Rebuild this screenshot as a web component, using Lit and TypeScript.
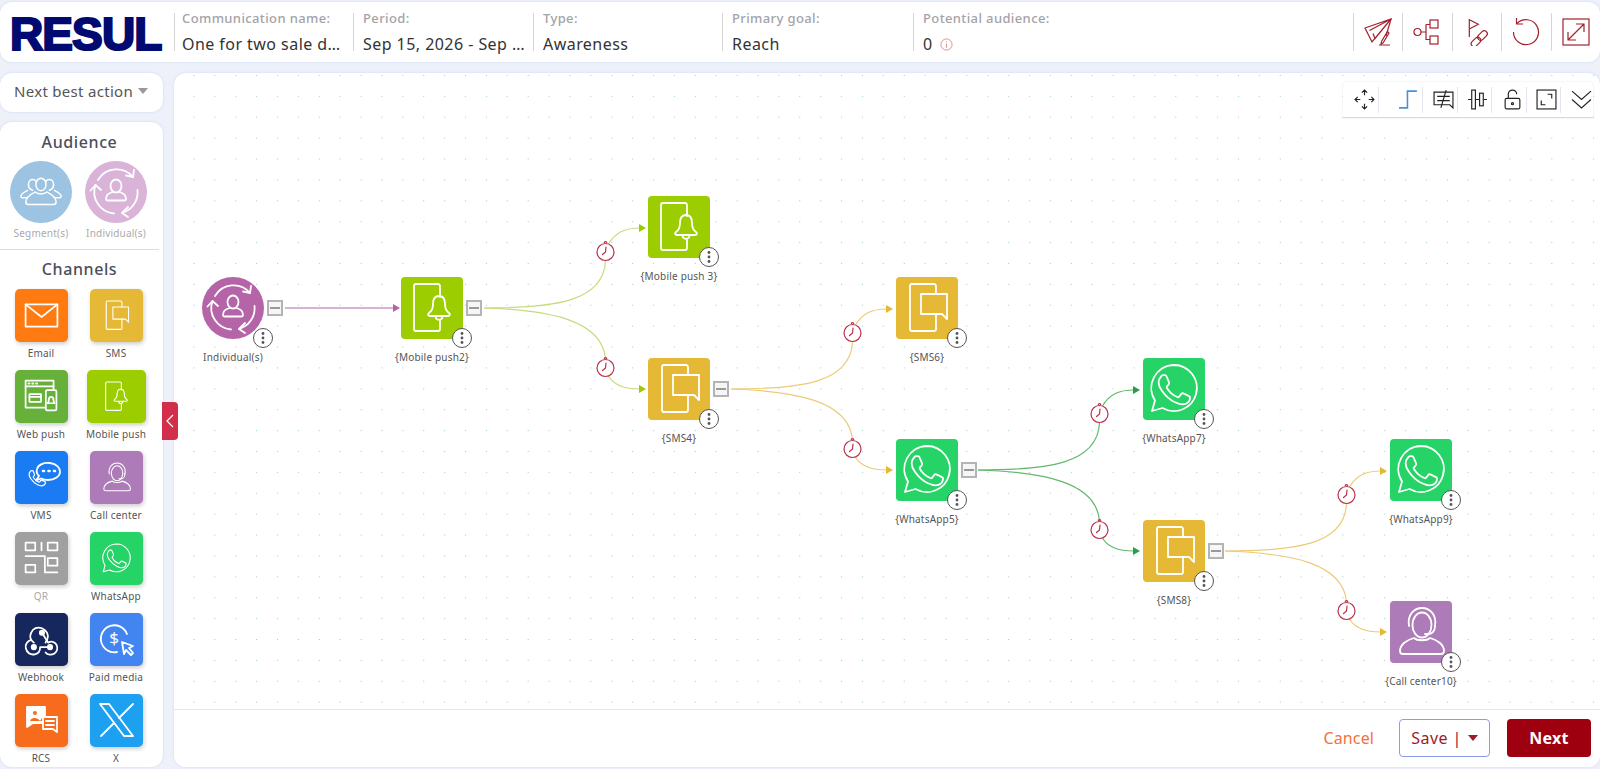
import { html, svg, css, LitElement, TemplateResult } from 'lit';
import { customElement } from 'lit/decorators.js';

// canvas origin in page coordinates, nodes below are given in page coordinates
const ORIGIN_X = 174;
const ORIGIN_Y = 73;

const HANDSET = 'M17.472 14.382c-.297-.149-1.758-.867-2.03-.967-.273-.099-.471-.148-.67.15-.197.297-.767.966-.94 1.164-.173.199-.347.223-.644.075-.297-.15-1.255-.463-2.39-1.475-.883-.788-1.48-1.761-1.653-2.059-.173-.297-.018-.458.13-.606.134-.133.298-.347.446-.52.149-.174.198-.298.298-.497.099-.198.05-.371-.025-.52-.075-.149-.669-1.612-.916-2.207-.242-.579-.487-.5-.669-.51-.173-.008-.371-.01-.57-.01-.198 0-.52.074-.792.372-.272.297-1.04 1.016-1.04 2.479 0 1.462 1.065 2.875 1.213 3.074.149.198 2.096 3.2 5.077 4.487.709.306 1.262.489 1.694.625.712.227 1.36.195 1.871.118.571-.085 1.758-.719 2.006-1.413.248-.694.248-1.289.173-1.413-.074-.124-.272-.198-.57-.347z';

const ICONS: Record<string, TemplateResult> = {
  mobile: svg`
    <path d="M39 20V9a2 2 0 0 0-2-2H15a2 2 0 0 0-2 2v43a2 2 0 0 0 2 2h22a2 2 0 0 0 2-2v-8"/>
    <path d="M38 19c-4 0-6 3-6 8 0 5-1 7-4 9-1.500 1-1 3 1 3h18c2 0 2.500-2 1-3-3-2-4-4-4-9 0-5-2-8-6-8z"/>
    <path d="M34.500 39c0 5 7 5 7 0"/>`,
  sms: svg`
    <path d="M40 17V9a2 2 0 0 0-2-2H16a2 2 0 0 0-2 2v43a2 2 0 0 0 2 2h22a2 2 0 0 0 2-2V37"/>
    <path d="M25 17h26v25l-5-5H25z"/>`,
  whatsapp: svg`
    <path d="M31 7a23 23 0 1 1-11.500 43L9 53l3-10.500A23 23 0 0 1 31 7z"/>
    <path transform="translate(0 .5) scale(2.6)" stroke-width=".7" d="${HANDSET}"/>`,
  call: svg`
    <ellipse cx="32" cy="24" rx="9.500" ry="12.500"/>
    <path d="M19 25c-2-11 5-18 13-18s15 7 13 18"/>
    <path d="M45 25c0 5-3 8-6 8h-4"/>
    <path d="M24 37c-8 2-14 7-14 13 0 2 1 3 3 3h38c2 0 3-1 3-3 0-6-6-11-14-13-3 3-13 3-16 0z"/>`,
  individual: svg`
    <path d="M13 19A21.500 21.500 0 0 1 48 16"/><path d="M41 14.500l7 1.500 1-7"/>
    <path d="M10.500 24A21.500 21.500 0 0 0 29 52.500"/><path d="M5.500 29.500l5-5.500 5.500 5"/>
    <path d="M52.500 29A21.500 21.500 0 0 1 37 52"/><path d="M43 46l-6 6 6 4"/>
    <ellipse cx="31" cy="25" rx="5.500" ry="6.500"/>
    <path d="M27.500 31c-4 1-6.500 4-6.500 7 0 1 .5 1.500 1.500 1.500h17c1 0 1.500-.5 1.500-1.500 0-3-2.500-6-6.500-7"/>`,
  segment: svg`
    <ellipse cx="31" cy="22" rx="6" ry="7.500"/>
    <path d="M13 43c0-7 7-10 11-12 3 3 11 3 14 0 4 2 11 5 11 12 0 2-1 3-3 3H16c-2 0-3-1-3-3z"/>
    <path d="M21 29c-3-1-5-4-5-7 0-4 2.500-6 5-6 1.500 0 3 .5 4 2"/>
    <path d="M41 29c3-1 5-4 5-7 0-4-2.500-6-5-6-1.500 0-3 .5-4 2"/>
    <path d="M14 38H9c-1.500 0-2-1-2-2 0-3 4-5 8-7"/>
    <path d="M48 38h5c1.500 0 2-1 2-2 0-3-4-5-8-7"/>`,
  email: svg`<rect x="11" y="15" width="33" height="23"/><path d="M11 15l16.500 13L44 15"/>`,
  webpush: svg`
    <path d="M31 38H11V10h29v9"/><path d="M11 16h29"/>
    <path d="M14 13h1M18 13h1M22 13h1" stroke-width="2"/>
    <rect x="15" y="24" width="12" height="8"/><path d="M15 27h12"/>
    <rect x="32" y="20" width="11" height="21" rx="1.500"/>
    <path d="M37.500 27c-2 0-2.500 2-2.500 3.500 0 2-1 2.500-1 3h7c0-.5-1-1-1-3 0-1.500-.5-3.500-2.500-3.500z"/>`,
  vms: svg`
    <path transform="translate(6 11) scale(1.350)" stroke-width=".9" d="${HANDSET}"/>
    <path d="M24 25c-2-2-3-4-2-7 1-4 7-7 13-6 7 1 10 5 10 9 0 4-5 8-12 8-3 0-5-.5-7-1.500l-5 2z"/>
    <path d="M28 20h1M33.500 20h1M39 20h1" stroke-width="2.600" stroke-linecap="round"/>`,
  qr: svg`
    <rect x="11" y="10" width="10" height="8"/><path d="M27.500 10v8"/><rect x="34" y="10" width="10" height="8"/>
    <rect x="11" y="33" width="10" height="8"/><rect x="34" y="26" width="10" height="8"/>
    <path d="M11 24h20v17h13"/>`,
  webhook: svg`
    <g stroke-width="2">
      <path d="M18 30c-4-3-5-7-3-11 2-5 7-7 12-5 5 2 8 7 6 12l-2 4"/>
      <path d="M15 27c-4 1-7 5-6 9 1 5 5 8 10 7 4-1 6-4 6-8h11"/>
      <path d="M27 19l7 11c3-2 7-1 9 2 2 4 1 8-2 10-3 2-8 2-10-1"/>
    </g>
    <circle cx="27" cy="19" r="2.500" fill="#fff"/><circle cx="18" cy="35" r="2.500" fill="#fff"/><circle cx="36" cy="35" r="2.500" fill="#fff"/>`,
  paid: svg`
    <path d="M37 21a13.500 13.500 0 1 0-10 18"/>
    <text x="24" y="31" text-anchor="middle" class="glyph">$</text>
    <path d="M32 29l11 4-4 2 4 5-2 2-5-5-2 4z"/>`,
  rcs: svg`
    <path d="M12 13h18v16H18l-6 4z" fill="#fff"/>
    <circle cx="20" cy="19" r="2" fill="#f76b1c" stroke="none"/>
    <path d="M15 27c1-4 8-4 10 0l2-3 2 3z" fill="#f76b1c" stroke="none"/>
    <path d="M28 23h14v15l-4-3H28z" fill="#f76b1c"/><path d="M31 27h8M31 31h8"/>`,
  x: svg`<path d="M10 10h9l24 32h-9z"/><path d="M43 10L29 24M24 29L11 42"/>`,
};

const NODES = [
  { x: 202, y: 277, icon: 'individual', label: 'Individual(s)', kind: 'individual', round: true, toggle: true },
  { x: 401, y: 277, icon: 'mobile', label: '{Mobile push2}', kind: 'mobile', toggle: true },
  { x: 648, y: 196, icon: 'mobile', label: '{Mobile push 3}', kind: 'mobile' },
  { x: 648, y: 358, icon: 'sms', label: '{SMS4}', kind: 'sms', toggle: true },
  { x: 896, y: 277, icon: 'sms', label: '{SMS6}', kind: 'sms' },
  { x: 896, y: 439, icon: 'whatsapp', label: '{WhatsApp5}', kind: 'whatsapp', toggle: true },
  { x: 1143, y: 358, icon: 'whatsapp', label: '{WhatsApp7}', kind: 'whatsapp' },
  { x: 1143, y: 520, icon: 'sms', label: '{SMS8}', kind: 'sms', toggle: true },
  { x: 1390, y: 439, icon: 'whatsapp', label: '{WhatsApp9}', kind: 'whatsapp' },
  { x: 1390, y: 601, icon: 'call', label: '{Call center10}', kind: 'call' },
];

// each fork: start of the line, colours of the line and of the arrowheads
const FORKS = [
  { x: 484, y: 308, line: '#c4dc7c', head: '#9bcb00' },
  { x: 731, y: 389, line: '#eccb78', head: '#e5b935' },
  { x: 978, y: 470, line: '#62b86c', head: '#2a9d4a' },
  { x: 1225, y: 551, line: '#eccb78', head: '#e5b935' },
];

const CHANNELS = [
  { icon: 'email', label: 'Email', kind: 'email', vb: '0 0 55 53' },
  { icon: 'sms', label: 'SMS', kind: 'sms' },
  { icon: 'webpush', label: 'Web push', kind: 'webpush', vb: '0 0 55 53' },
  { icon: 'mobile', label: 'Mobile push', kind: 'mobile', wide: true },
  { icon: 'vms', label: 'VMS', kind: 'vms', vb: '0 0 53 53' },
  { icon: 'call', label: 'Call center', kind: 'call' },
  { icon: 'qr', label: 'QR', kind: 'qr', vb: '0 0 55 53', off: true },
  { icon: 'whatsapp', label: 'WhatsApp', kind: 'whatsapp' },
  { icon: 'webhook', label: 'Webhook', kind: 'webhook', vb: '-3 -3 59 59' },
  { icon: 'paid', label: 'Paid media', kind: 'paid', vb: '0 0 53 53' },
  { icon: 'rcs', label: 'RCS', kind: 'rcs', vb: '0 0 53 53' },
  { icon: 'x', label: 'X', kind: 'x', vb: '0 0 53 53' },
];

const FIELDS = [
  { label: 'Communication name:', value: 'One for two sale d…', w: 179 },
  { label: 'Period:', value: 'Sep 15, 2026 - Sep …', w: 180 },
  { label: 'Type:', value: 'Awareness', w: 189 },
  { label: 'Primary goal:', value: 'Reach', w: 191 },
];

@customElement('app-root')
export class AppRoot extends LitElement {
  static styles = css`
    :host {
      display: block;
      height: 769px;
      overflow: hidden;
      background: #eef1fa;
      font-family: "Noto Sans", "Open Sans", sans-serif;
      color: #444;
    }
    * { box-sizing: border-box; }
    svg { display: block; fill: none; }

    .page { display: flex; flex-direction: column; height: 769px; padding: 2px 0 2px 0; gap: 11px; }
    .card { background: #fff; border-radius: 12px; box-shadow: 0 0 3px #cfd7ee; }

    header { flex: none; height: 60px; display: flex; align-items: stretch; padding: 11px 0; }
    .logo {
      width: 174px; padding: 2px 0 0 10px; flex: none;
      font: 700 46px/38px "Liberation Sans", Arial, sans-serif;
      color: #000a70; -webkit-text-stroke: 2.200px #000a70; letter-spacing: -.9px;
    }
    .field { flex: none; padding-left: 9px; border-left: 1px solid #d5d5d5; display: flex; flex-direction: column; justify-content: space-between; }
    .field:nth-child(2) { padding-left: 7px; }
    .field small { font-size: 13px; font-weight: 500; line-height: 15px; color: #a3a3a8; letter-spacing: .38px; margin-top: -2px; }
    .field span { font-size: 16px; line-height: 20px; color: #333; letter-spacing: .45px; white-space: nowrap; display: flex; align-items: center; gap: 7px; margin-bottom: -3px; }
    .field.grow { flex: 1; }
    .action { flex: none; width: 49.500px; border-left: 1px solid #d5d5d5; display: flex; align-items: center; justify-content: center; color: #a3202c; }
    .action svg { width: 28px; height: 28px; stroke: currentColor; stroke-width: 1.200; }
    .info { width: 13px; height: 13px; stroke: #d98a8a; stroke-width: 1; }

    .body { flex: 1; display: flex; gap: 11px; min-height: 0; }
    aside { flex: none; width: 163px; display: flex; flex-direction: column; gap: 10px; }
    .select { flex: none; height: 39px; display: flex; align-items: center; gap: 5px; padding: 0 0 3px 14px; font-size: 15px; letter-spacing: .3px; color: #555; }
    .select i { width: 0; height: 0; border: 5px solid transparent; border-top: 6px solid #999; border-bottom: 0; }

    .palette { flex: 1; padding-top: 9px; overflow: hidden; }
    .palette h3 { margin: 0; font-size: 16px; line-height: 22px; font-weight: 500; text-align: center; color: #4a4f5c; letter-spacing: .6px; padding-right: 4px; }
    .grid { display: grid; grid-template-columns: 82px 68px; justify-items: center; row-gap: 10px; margin-top: 9px; }
    .grid.audience { margin-top: 8px; }
    .item { display: flex; flex-direction: column; align-items: center; width: 70px; gap: 4px; }
    .item b { font-size: 10px; line-height: 14px; font-weight: 400; color: #555; letter-spacing: .2px; white-space: nowrap; }
    .item.off b { color: #aaa; }
    .rule { height: 1px; margin: 9px 4px 8px 0; background: #cfe0f0; }
    .audience .item { gap: 3px; }

    .tile { width: 53px; height: 53px; border-radius: 5px; flex: none; box-shadow: 1px 2px 4px #0003; }
    .tile.wide { width: 59px; }
    .tile.big { width: 62px; height: 62px; border-radius: 4px; box-shadow: none; }
    .tile.round { border-radius: 50%; }
    .tile svg { width: 100%; height: 100%; stroke: #fff; stroke-width: 1.800; stroke-linejoin: round; stroke-linecap: round; }
    .tile text.glyph { font: 400 17px "Noto Sans", sans-serif; fill: #fff; stroke: none; }
    .email { background: #ff7a10; }
    .sms { background: #e5b935; }
    .webpush { background: #67b13a; }
    .mobile { background: #9bcd00; }
    .vms { background: #1a7bf2; }
    .call { background: #ad7bb8; }
    .qr { background: #a0a0a0; }
    .whatsapp { background: #25d366; }
    .webhook { background: #16275e; }
    .paid { background: #4285f0; }
    .rcs { background: #f76b1c; }
    .x { background: #1da0ef; }
    .segment { background: #9dc3e3; }
    .individual { background: #b565a7; }
    .individual.soft { background: #d9b3d8; }

    main { flex: 1; display: flex; flex-direction: column; position: relative; min-width: 0; }
    .stage {
      flex: 1; position: relative; border-radius: 12px 12px 0 0;
      background-image: radial-gradient(circle at center, #8fd3ca .7px, transparent 1px);
      background-size: 20.900px 20.900px;
      background-position: 9.500px -8px;
    }
    .edges { position: absolute; inset: 0; width: 100%; height: 100%; }
    .handle {
      position: absolute; left: -12px; top: 329px; width: 16px; height: 38px; z-index: 2;
      background: #d2304a; border-radius: 0 4px 4px 0; display: flex; align-items: center; justify-content: center;
    }
    .handle svg { width: 8px; height: 14px; stroke: #fff; stroke-width: 1.200; }

    .node { position: absolute; width: 62px; display: flex; flex-direction: column; align-items: center; }
    .node label { margin-top: 11px; font-size: 10px; line-height: 14px; white-space: nowrap; color: #555; letter-spacing: .2px; }
    .more {
      position: absolute; left: 51px; top: 51px; width: 20px; height: 20px; border-radius: 50%;
      background: #fff; border: 1.400px solid #555;
    }
    .more svg { width: 100%; height: 100%; fill: #555; }
    .toggle {
      position: absolute; left: 65px; top: 23px; width: 16px; height: 16px; background: #f6f6f6;
      border: 2px solid #b4b4b4; display: flex; align-items: center; justify-content: center;
    }
    .toggle::before { content: ""; width: 10px; height: 1.500px; background: #999; }

    .tools {
      position: absolute; top: 9px; right: 7px; width: 250px; height: 36px; z-index: 1;
      display: flex; align-items: center; background: #fff;
      border-bottom: 1.500px solid #c8dcec; border-radius: 4px 4px 0 0;
      box-shadow: 0 0 2px #d9e0ee;
    }
    .tools div { height: 26px; width: 34.500px; padding-left: 7px; display: flex; align-items: center; justify-content: center; border-right: 1px solid #e2e6ee; flex: none; }
    .tools div:first-child { width: 36px; }
    .tools div:nth-child(2) { width: 44px; padding-left: 16px; }
    .tools div:last-child { border: 0; }
    .tools svg { width: 21px; height: 21px; flex: none; stroke: #222; stroke-width: 1.100; }
    .tools svg.step { stroke: #4a90d9; stroke-width: 1.500; }

    footer {
      flex: none; height: 58px; border-top: 1px solid #dfe6f2; background: #fff; border-radius: 0 0 12px 12px;
      display: flex; align-items: center; justify-content: flex-end; padding: 0 9px 2px 0;
    }
    .cancel { font-size: 16px; color: #f5703d; margin-right: 25px; letter-spacing: .1px; }
    .save {
      width: 91px; height: 38px; border: 1px solid #8f9bea; border-radius: 4px; color: #9c1c2c; margin-right: 17px;
      display: flex; align-items: center; justify-content: center; gap: 6px; font-size: 16px; letter-spacing: .4px;
    }
    .save i { width: 0; height: 0; border: 5px solid transparent; border-top: 6px solid #9c1c2c; border-bottom: 0; }
    .next {
      width: 84px; height: 38px; background: #9e0010; color: #fff; border-radius: 4px;
      display: flex; align-items: center; justify-content: center; font-size: 16px; font-weight: 700; letter-spacing: .3px;
    }
  `;

  private clock(x: number, y: number) {
    return svg`<g transform="translate(${x} ${y})" stroke="#b9304a" stroke-width="1.200">
      <circle r="8.500" fill="#fff"/>
      <path d="M-1.300-9a1.300 1.300 0 0 1 2.600 0" />
      <path d="M.5-5 0 0 -3 2.500" stroke-linecap="round"/>
    </g>`;
  }

  private fork(f: typeof FORKS[number]) {
    const cx = f.x + 121.5;
    const up = f.y - 56;
    const down = f.y + 60;
    const tipUp = f.y - 80;
    const tipDown = f.y + 81;
    const tip = f.x + 162;
    return svg`<g stroke=${f.line} stroke-width="1.200">
      <path d="M${f.x} ${f.y}C${f.x + 70} ${f.y} ${cx - 2} ${f.y - 6} ${cx} ${up + 9}"/>
      <path d="M${cx + 3} ${up - 8}C${cx + 10} ${tipUp + 4} ${cx + 20} ${tipUp} ${tip - 6} ${tipUp}"/>
      <path d="M${f.x} ${f.y}C${f.x + 65} ${f.y + 2} ${cx - 3} ${f.y + 12} ${cx} ${down - 9}"/>
      <path d="M${cx + 3} ${down + 8}C${cx + 8} ${tipDown - 4} ${cx + 18} ${tipDown} ${tip - 6} ${tipDown}"/>
    </g>
    <path d="M${tip - 7} ${tipUp - 4}l7 4-7 4zM${tip - 7} ${tipDown - 4}l7 4-7 4z" fill=${f.head}/>
    ${this.clock(cx, up)}${this.clock(cx, down)}`;
  }

  private renderNode(n: typeof NODES[number]) {
    return html`<div class="node" style="left:${n.x - ORIGIN_X}px;top:${n.y - ORIGIN_Y}px">
      <div class="tile big ${n.kind} ${n.round ? 'round' : ''}">
        <svg viewBox="0 0 62 62">${ICONS[n.icon]}</svg>
      </div>
      <div class="more"><svg viewBox="0 0 18 18"><circle cx="9" cy="4.500" r="1.400"/><circle cx="9" cy="9" r="1.400"/><circle cx="9" cy="13.500" r="1.400"/></svg></div>
      ${n.toggle ? html`<div class="toggle"></div>` : ''}
      <label>${n.label}</label>
    </div>`;
  }

  private renderHeader() {
    return html`<header class="card">
      <div class="logo">RESUL</div>
      ${FIELDS.map(f => html`<div class="field" style="width:${f.w}px"><small>${f.label}</small><span>${f.value}</span></div>`)}
      <div class="field grow">
        <small>Potential audience:</small>
        <span>0 <svg class="info" viewBox="0 0 14 14"><circle cx="7" cy="7" r="6"/><path d="M7 6v4.500M7 3.500v1"/></svg></span>
      </div>
      <div class="action"><svg viewBox="0 0 28 28"><path d="M1 10L27 1 8 24zM5.500 12.500L27 1 11 20.500 9 15.500"/><path d="M27 1l-5 17"/><path d="M25 15l-6 10-2 1 .5-2.500 6-10zM15 27h11"/></svg></div>
      <div class="action"><svg viewBox="0 0 28 28"><circle cx="4.500" cy="14" r="3.500"/><path d="M8 14h5M13 6.500v15h4M13 6.500h4"/><rect x="17" y="2" width="8" height="8"/><rect x="17" y="18" width="8" height="8"/></svg></div>
      <div class="action"><svg viewBox="0 0 28 28"><path d="M6.300 19V1.700l9 4.600-9 4.700"/><rect x="14" y="14.500" width="11" height="6" rx="3" transform="rotate(-45 19.500 17.500)"/><rect x="7.500" y="21" width="11" height="6" rx="3" transform="rotate(-45 13 24)"/></svg></div>
      <div class="action"><svg viewBox="0 0 28 28"><path d="M5 5.500A12.500 12.500 0 1 1 1.500 14"/><path d="M4.500 0v6h6.500"/></svg></div>
      <div class="action"><svg viewBox="0 0 28 28"><rect x="1" y="1" width="26" height="26"/><path d="M6 22L22 6M14 6h8v8M6 14v8h8"/></svg></div>
    </header>`;
  }

  private renderAside() {
    return html`<aside>
      <div class="card select">Next best action <i></i></div>
      <div class="card palette">
        <h3>Audience</h3>
        <div class="grid audience">
          <div class="item off"><div class="tile big round segment"><svg viewBox="-6 -6 74 74">${ICONS.segment}</svg></div><b>Segment(s)</b></div>
          <div class="item off"><div class="tile big round individual soft"><svg viewBox="0 0 62 62">${ICONS.individual}</svg></div><b>Individual(s)</b></div>
        </div>
        <div class="rule"></div>
        <h3>Channels</h3>
        <div class="grid">
          ${CHANNELS.map(c => html`<div class="item ${c.off ? 'off' : ''}">
            <div class="tile ${c.kind} ${c.wide ? 'wide' : ''}"><svg viewBox=${c.vb ?? '-13 -13 88 88'}>${ICONS[c.icon]}</svg></div>
            <b>${c.label}</b>
          </div>`)}
        </div>
      </div>
    </aside>`;
  }

  private renderTools() {
    return html`<div class="tools">
      <div><svg viewBox="0 0 20 20"><path d="M10 1v5M10 14v5M1 10h5M14 10h5M7.500 3.500L10 1l2.500 2.500M7.500 16.500L10 19l2.500-2.500M3.500 7.500L1 10l2.500 2.500M16.500 7.500L19 10l-2.500 2.500"/></svg></div>
      <div><svg class="step" viewBox="0 0 20 20"><path d="M1 18h8V2h9"/></svg></div>
      <div><svg viewBox="0 0 20 20"><path d="M1 3h18v15l-3-3H1zM4 7h12M4 11h12M12.500 1L7.500 18"/></svg></div>
      <div><svg viewBox="0 0 20 20"><rect x="4.500" y="1" width="3.500" height="18"/><rect x="12" y="4" width="3.500" height="12"/><path d="M1 10h3.500M8 10h4M15.500 10H19"/></svg></div>
      <div><svg viewBox="0 0 20 20"><rect x="3" y="9" width="14" height="10" rx="1.500"/><path d="M6 9V5a4 4 0 0 1 8 0"/><circle cx="10" cy="14" r="1"/></svg></div>
      <div><svg viewBox="0 0 20 20"><rect x="1" y="1" width="18" height="18"/><path d="M11 5h4v4M5 11v4h4"/></svg></div>
      <div><svg viewBox="0 0 20 20"><path d="M1 2l9 8 9-8M1 10l9 8 9-8"/></svg></div>
    </div>`;
  }

  render() {
    return html`<div class="page">
      ${this.renderHeader()}
      <div class="body">
        ${this.renderAside()}
        <main class="card">
          <div class="stage">
            <div class="handle"><svg viewBox="0 0 8 14"><path d="M7 1L1 7l6 6"/></svg></div>
            <svg class="edges" viewBox="${ORIGIN_X} ${ORIGIN_Y} 1426 636" preserveAspectRatio="xMinYMin">
              <path d="M285 308H393" stroke="#b565a7" stroke-width="1.200"/>
              <path d="M393 304l7 4-7 4z" fill="#b565a7"/>
              ${FORKS.map(f => this.fork(f))}
            </svg>
            ${NODES.map(n => this.renderNode(n))}
            ${this.renderTools()}
          </div>
          <footer>
            <span class="cancel">Cancel</span>
            <div class="save">Save | <i></i></div>
            <div class="next">Next</div>
          </footer>
        </main>
      </div>
    </div>`;
  }
}
